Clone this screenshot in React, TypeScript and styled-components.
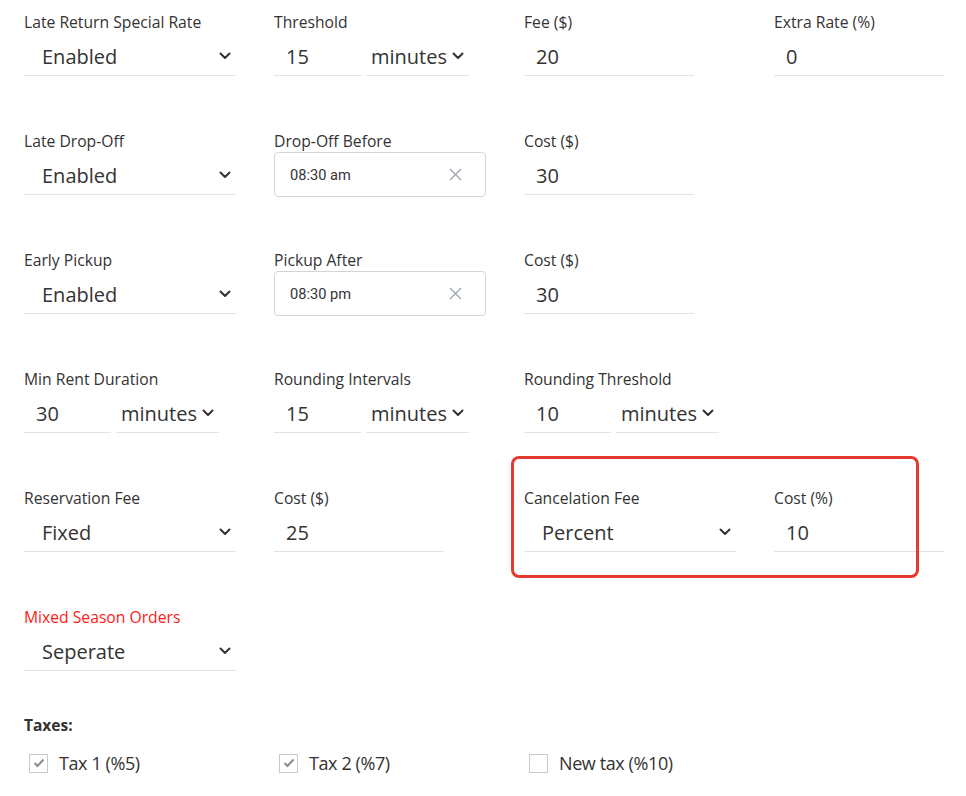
import React from "react";
import styled, { createGlobalStyle } from "styled-components";

const GlobalStyle = createGlobalStyle`
  html, body { margin: 0; padding: 0; background: #ffffff; }
  body {
    font-family: "Open Sans", "Noto Sans", sans-serif;
    color: #333333;
  }
  * { box-sizing: border-box; }
`;

const Page = styled.div`
  width: 966px;
  padding: 12px 22px 0 24px;
`;

const FormRow = styled.div<{ $h?: number }>`
  display: grid;
  grid-template-columns: repeat(3, 250px) 170px;
  height: ${(p) => p.$h ?? 119}px;
`;

const Field = styled.div`
  display: flex;
  flex-direction: column;
`;

const Label = styled.div<{ $alert?: boolean }>`
  font-size: 15.7px;
  line-height: 20px;
  color: ${(p) => (p.$alert ? "#ff1a1a" : "#333333")};
  white-space: nowrap;
`;

const ControlGroup = styled.div`
  display: flex;
  gap: 5px;
`;

const Control = styled.div<{ $w: number; $pad: number }>`
  width: ${(p) => p.$w}px;
  height: 44px;
  padding: 5px 0 0 ${(p) => p.$pad}px;
  border-bottom: 1px solid #e3e3e3;
  display: flex;
  align-items: center;
  font-size: 20px;
  color: #333333;
`;

const Value = styled.span`
  flex: 1;
  white-space: nowrap;
`;

const Chevron = styled.svg<{ $mr: number }>`
  width: 12px;
  height: 8px;
  margin-right: ${(p) => p.$mr}px;
  flex: none;
`;

const TimePicker = styled.div`
  width: 212px;
  height: 45px;
  margin-top: 1px;
  border: 1px solid #d4d4d4;
  border-radius: 4px;
  display: flex;
  align-items: center;
  padding: 0 23px 0 15px;
  font-family: Roboto, "Liberation Sans", sans-serif;
  font-size: 14.6px;
  color: #333333;
`;

const ClearIcon = styled.svg`
  width: 13px;
  height: 13px;
  flex: none;
`;

const HighlightArea = styled.div`
  grid-column: span 2;
  display: grid;
  grid-template-columns: 250px 170px;
  position: relative;
`;

const HighlightFrame = styled.div`
  position: absolute;
  left: -13px;
  top: -32px;
  width: 408px;
  height: 122px;
  border: 3.5px solid #e53a30;
  border-radius: 8px;
  pointer-events: none;
`;

const TaxTitle = styled.div`
  font-size: 15.5px;
  font-weight: 700;
  line-height: 20px;
  color: #333333;
`;

const TaxRow = styled.div`
  display: grid;
  grid-template-columns: repeat(3, 250px);
  margin-top: 17px;
  padding-left: 5px;
`;

const TaxOption = styled.label`
  display: flex;
  align-items: center;
  gap: 11px;
  font-size: 18px;
  line-height: 22px;
  color: #333333;
  letter-spacing: -0.4px;
`;

const Box = styled.span`
  width: 19px;
  height: 19px;
  border: 1px solid #c9c9c9;
  background: #ffffff;
  display: flex;
  align-items: center;
  justify-content: center;
  flex: none;
`;

const ChevronIcon = ({ mr = 0 }: { mr?: number }) => (
  <Chevron $mr={mr} viewBox="0 0 12 8">
    <path d="M1.5 1.5 L6 6 L10.5 1.5" fill="none" stroke="#333" strokeWidth="2" strokeLinecap="round" strokeLinejoin="round" />
  </Chevron>
);

const SelectControl = ({ value, w = 212, pad = 18, mr = 5 }: { value: string; w?: number; pad?: number; mr?: number }) => (
  <Control $w={w} $pad={pad}>
    <Value>{value}</Value>
    <ChevronIcon mr={mr} />
  </Control>
);

const InputControl = ({ value, w = 170 }: { value: string; w?: number }) => (
  <Control $w={w} $pad={12}>
    <Value>{value}</Value>
  </Control>
);

const UnitControl = ({ value }: { value: string }) => (
  <ControlGroup>
    <InputControl value={value} w={87} />
    <SelectControl value="minutes" w={103} pad={5} mr={5} />
  </ControlGroup>
);

const Time = ({ value }: { value: string }) => (
  <TimePicker>
    <Value>{value}</Value>
    <ClearIcon viewBox="0 0 13 13">
      <path d="M1 1 L12 12 M12 1 L1 12" stroke="#9aa3ad" strokeWidth="1.2" />
    </ClearIcon>
  </TimePicker>
);

const Check = ({ checked, label }: { checked: boolean; label: string }) => (
  <TaxOption>
    <Box>
      {checked && (
        <svg width="12" height="10" viewBox="0 0 12 10">
          <path d="M1.5 5 L4.5 8 L10.5 1.5" fill="none" stroke="#8a8a8a" strokeWidth="2" />
        </svg>
      )}
    </Box>
    {label}
  </TaxOption>
);

export default function App() {
  return (
    <>
      <GlobalStyle />
      <Page>
        <FormRow>
          <Field>
            <Label>Late Return Special Rate</Label>
            <SelectControl value="Enabled" />
          </Field>
          <Field>
            <Label>Threshold</Label>
            <UnitControl value="15" />
          </Field>
          <Field>
            <Label>Fee ($)</Label>
            <InputControl value="20" />
          </Field>
          <Field>
            <Label>Extra Rate (%)</Label>
            <InputControl value="0" />
          </Field>
        </FormRow>

        <FormRow>
          <Field>
            <Label>Late Drop-Off</Label>
            <SelectControl value="Enabled" />
          </Field>
          <Field>
            <Label>Drop-Off Before</Label>
            <Time value="08:30 am" />
          </Field>
          <Field>
            <Label>Cost ($)</Label>
            <InputControl value="30" />
          </Field>
        </FormRow>

        <FormRow>
          <Field>
            <Label>Early Pickup</Label>
            <SelectControl value="Enabled" />
          </Field>
          <Field>
            <Label>Pickup After</Label>
            <Time value="08:30 pm" />
          </Field>
          <Field>
            <Label>Cost ($)</Label>
            <InputControl value="30" />
          </Field>
        </FormRow>

        <FormRow>
          <Field>
            <Label>Min Rent Duration</Label>
            <UnitControl value="30" />
          </Field>
          <Field>
            <Label>Rounding Intervals</Label>
            <UnitControl value="15" />
          </Field>
          <Field>
            <Label>Rounding Threshold</Label>
            <UnitControl value="10" />
          </Field>
        </FormRow>

        <FormRow>
          <Field>
            <Label>Reservation Fee</Label>
            <SelectControl value="Fixed" />
          </Field>
          <Field>
            <Label>Cost ($)</Label>
            <InputControl value="25" />
          </Field>
          <HighlightArea>
            <HighlightFrame />
            <Field>
              <Label>Cancelation Fee</Label>
              <SelectControl value="Percent" />
            </Field>
            <Field>
              <Label>Cost (%)</Label>
              <InputControl value="10" />
            </Field>
          </HighlightArea>
        </FormRow>

        <FormRow $h={108}>
          <Field>
            <Label $alert>Mixed Season Orders</Label>
            <SelectControl value="Seperate" />
          </Field>
        </FormRow>

        <TaxTitle>Taxes:</TaxTitle>
        <TaxRow>
          <Check checked label="Tax 1 (%5)" />
          <Check checked label="Tax 2 (%7)" />
          <Check checked={false} label="New tax (%10)" />
        </TaxRow>
      </Page>
    </>
  );
}
